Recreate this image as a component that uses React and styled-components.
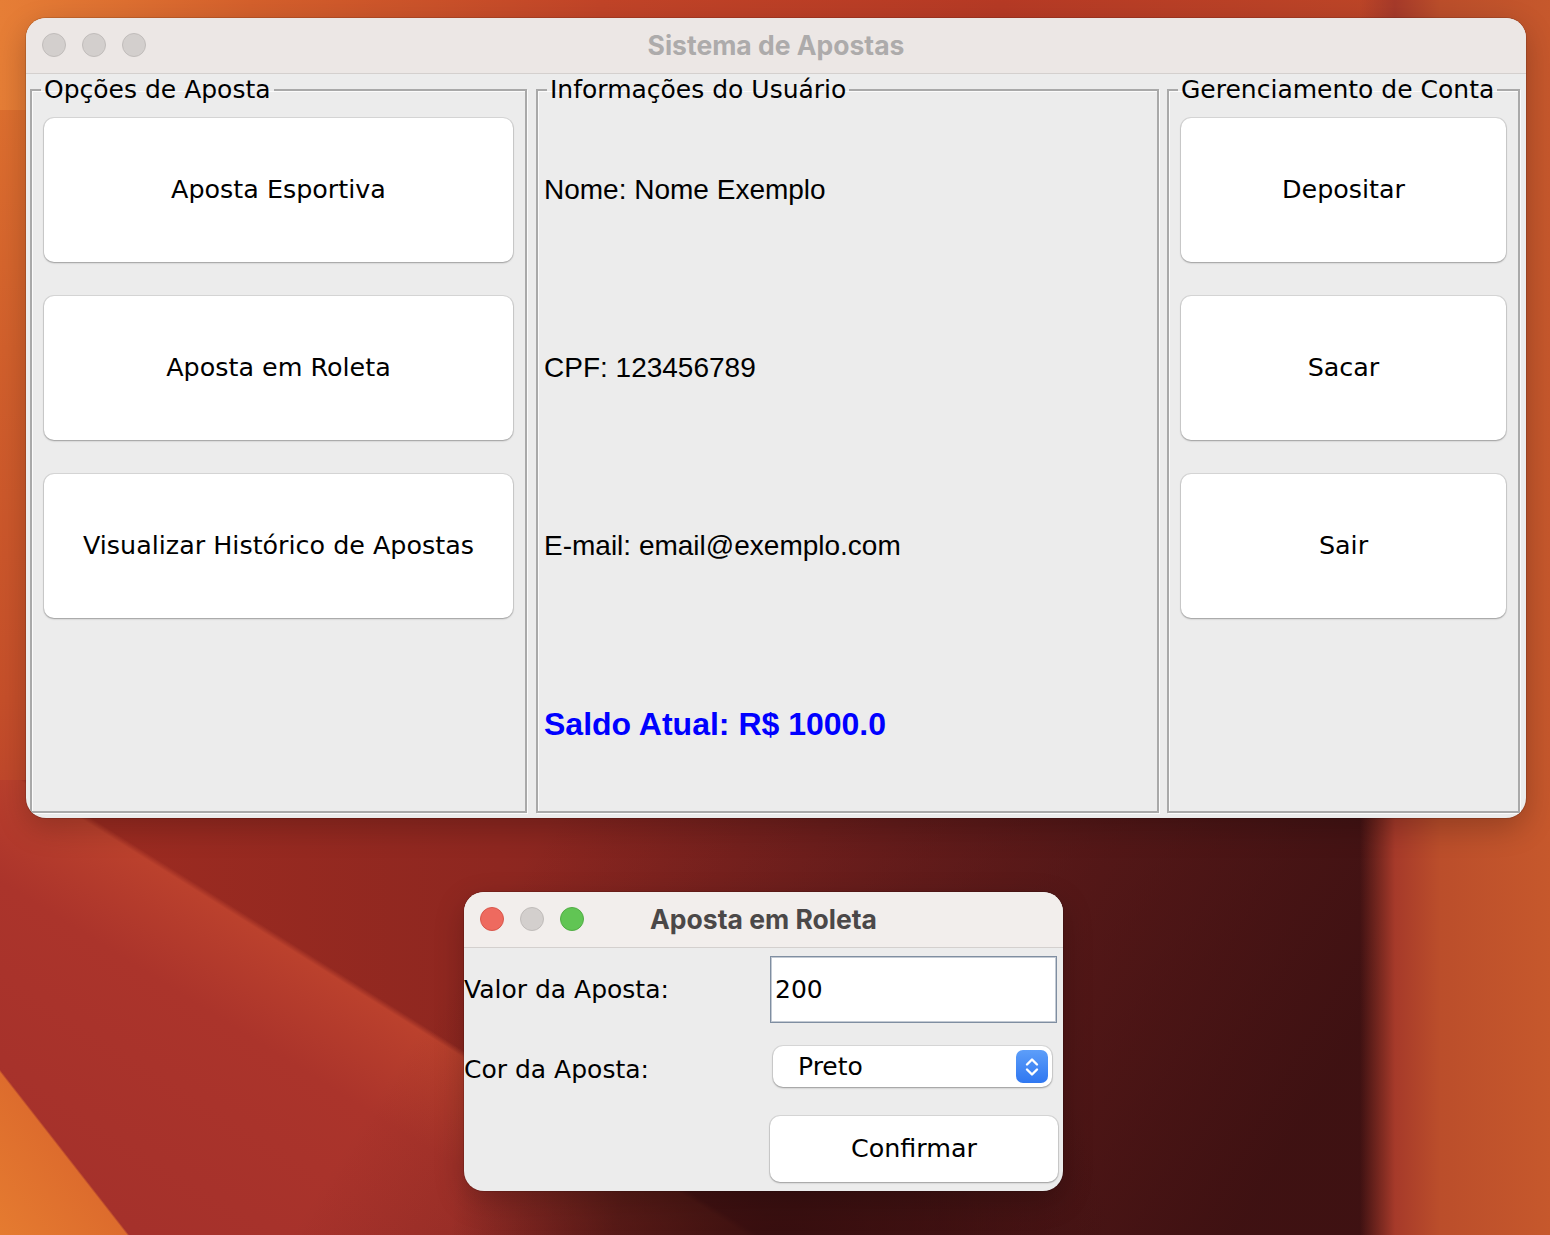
import React from 'react';
import styled, { createGlobalStyle } from 'styled-components';

const GlobalStyle = createGlobalStyle`
  html, body {
    margin: 0;
    padding: 0;
  }
  body {
    width: 1550px;
    height: 1235px;
    overflow: hidden;
    font-family: "DejaVu Sans", "Noto Sans", sans-serif;
  }
`;

// macOS Ventura style wallpaper, built from layered gradients
const Desktop = styled.div`
  width: 1550px;
  height: 1235px;
  box-sizing: border-box;
  padding: 18px 24px 0 26px;
  background:
    linear-gradient(52deg, #e57b30 0, #dd6c2d 100px, transparent 102px),
    linear-gradient(to right, transparent 1360px, #a63a2a 1395px, #bb4e2b 1440px, #c6582c 1550px),
    linear-gradient(to right, #e67e36, #d4602c 250px, #c14428 600px, #b63a25 1000px, #bd4628 1400px, #c24c29) 0 0 / 100% 110px no-repeat,
    linear-gradient(#e27530, #d2602c 350px, #c64f2a 700px, #c0482b 780px) 0 0 / 30px 780px no-repeat,
    radial-gradient(circle 330px at 780px 1250px, rgba(50, 13, 14, 0.9) 0, rgba(50, 13, 14, 0.6) 50%, rgba(50, 13, 14, 0) 100%),
    linear-gradient(122deg, rgba(55, 15, 16, 0) 900px, rgba(55, 15, 16, 0.85) 1700px),
    linear-gradient(32deg, #a3302b 0, #ab342b 300px, #bb412d 396px, transparent 402px),
    linear-gradient(to right, #a02c21, #8e2720 500px, #7a2220 900px, #6a1e1e 1300px);
`;

const Window = styled.div`
  width: ${p => p.$w}px;
  height: ${p => p.$h}px;
  margin: ${p => p.$margin || 0};
  box-sizing: border-box;
  border-radius: 20px;
  background: #ececec;
  overflow: hidden;
  display: flex;
  flex-direction: column;
  box-shadow: 0 0 0 1px rgba(0, 0, 0, 0.12), 0 10px 30px rgba(0, 0, 0, 0.22);
`;

const TitleBar = styled.div`
  flex: none;
  height: 54px;
  display: grid;
  grid-template-columns: 1fr auto 1fr;
  align-items: center;
  padding: 0 16px 1px;
  background: ${p => (p.$active ? '#f2eeec' : '#ece7e5')};
  border-bottom: 1px solid #d4d0ce;
`;

const Lights = styled.div`
  display: flex;
  gap: 16px;
`;

const Light = styled.span`
  width: 24px;
  height: 24px;
  border-radius: 50%;
  box-sizing: border-box;
  background: ${p => p.$color};
  border: 1px solid ${p => p.$edge};
`;

const WindowTitle = styled.div`
  font-family: Inter, "Liberation Sans", sans-serif;
  font-weight: 700;
  font-size: 26.5px;
  color: ${p => (p.$active ? '#4b4848' : '#adabab')};
  white-space: nowrap;
`;

const MainContent = styled.div`
  flex: 1;
  display: grid;
  grid-template-columns: 498px 623px 353px;
  gap: 8px;
  padding: 2px 5px 5px 4px;
  & > :first-child {
    margin-right: 1px;
  }
`;

const Group = styled.fieldset`
  margin: 0;
  min-width: 0;
  padding: 0 ${p => p.$pad}px;
  border: 2px solid #a9a9a9;
  box-shadow: inset 1px 1px 0 #fbfbfb, 1px 1px 0 #fbfbfb;
`;

const GroupTitle = styled.legend`
  padding: 0 3px;
  margin-left: ${p => 9 - p.$pad}px;
  font-size: 25px;
  line-height: 28px;
  color: #000;
`;

const Rows = styled.div`
  display: grid;
  grid-template-rows: repeat(4, 144px);
  row-gap: 34px;
  padding-top: 14px;
`;

const Button = styled.button`
  margin: ${p => p.$margin || 0};
  border: none;
  border-radius: 10px;
  background: #fff;
  box-shadow: 0 0 0 1px rgba(0, 0, 0, 0.09), 0 1px 2px rgba(0, 0, 0, 0.28);
  font-family: "DejaVu Sans", sans-serif;
  font-size: 25.4px;
  color: #000;
  padding: 0 0 2px;
`;

const Info = styled.div`
  display: flex;
  align-items: center;
  font-family: "Liberation Sans", Arial, sans-serif;
  font-size: ${p => (p.$strong ? 32 : 28)}px;
  font-weight: ${p => (p.$strong ? 700 : 400)};
  color: ${p => (p.$strong ? '#0000ff' : '#000')};
`;

const DialogBody = styled.div`
  flex: 1;
  display: grid;
  grid-template-columns: 306px 1fr;
  grid-template-rows: 81px 81px 81px;
  padding-right: 5px;
`;

const FieldLabel = styled.div`
  display: flex;
  align-items: center;
  padding-top: ${p => p.$shift || 0}px;
  font-size: 25px;
  color: #000;
`;

const TextField = styled.div`
  margin: 8px 1px 6px 0;
  display: flex;
  align-items: center;
  padding-left: 4px;
  background: #fff;
  border: 1px solid #7f8ea1;
  box-shadow: inset 0 0 0 1px #c3cad3;
  font-size: 25px;
  color: #000;
`;

const Select = styled.div`
  align-self: center;
  margin: 0 6px 6px 3px;
  height: 41px;
  display: flex;
  align-items: center;
  justify-content: space-between;
  padding: 0 4px 0 25px;
  border-radius: 10px;
  background: #fff;
  box-shadow: 0 0 0 1px rgba(0, 0, 0, 0.08), 0 1px 2px rgba(0, 0, 0, 0.3);
  font-size: 25px;
  color: #000;
`;

const Stepper = styled.span`
  width: 32px;
  height: 33px;
  border-radius: 7px;
  background: linear-gradient(#5d9ef9, #2f77f1);
  display: flex;
  align-items: center;
  justify-content: center;
`;

function Chevrons() {
  return (
    <svg width="18" height="24" viewBox="0 0 18 24">
      <path d="M4 9.5 L9 4.5 L14 9.5" fill="none" stroke="#fff" strokeWidth="2.4" strokeLinecap="round" strokeLinejoin="round" />
      <path d="M4 14.5 L9 19.5 L14 14.5" fill="none" stroke="#fff" strokeWidth="2.4" strokeLinecap="round" strokeLinejoin="round" />
    </svg>
  );
}

function TrafficLights({ active }) {
  return (
    <Lights>
      <Light $color={active ? '#ee6a5f' : '#d3cfcd'} $edge={active ? '#d8574c' : '#c0bcba'} />
      <Light $color="#d3cfcd" $edge="#c0bcba" />
      <Light $color={active ? '#61c554' : '#d3cfcd'} $edge={active ? '#51ad45' : '#c0bcba'} />
    </Lights>
  );
}

export default function App() {
  return (
    <Desktop>
      <GlobalStyle />
      <Window $w={1500} $h={800}>
        <TitleBar>
          <TrafficLights />
          <WindowTitle>Sistema de Apostas</WindowTitle>
        </TitleBar>
        <MainContent>
          <Group $pad={12}>
            <GroupTitle $pad={12}>Opções de Aposta</GroupTitle>
            <Rows>
              <Button>Aposta Esportiva</Button>
              <Button>Aposta em Roleta</Button>
              <Button>Visualizar Histórico de Apostas</Button>
            </Rows>
          </Group>
          <Group $pad={6}>
            <GroupTitle $pad={6}>Informações do Usuário</GroupTitle>
            <Rows>
              <Info>Nome: Nome Exemplo</Info>
              <Info>CPF: 123456789</Info>
              <Info>E-mail: email@exemplo.com</Info>
              <Info $strong>Saldo Atual: R$ 1000.0</Info>
            </Rows>
          </Group>
          <Group $pad={12}>
            <GroupTitle $pad={12}>Gerenciamento de Conta</GroupTitle>
            <Rows>
              <Button>Depositar</Button>
              <Button>Sacar</Button>
              <Button>Sair</Button>
            </Rows>
          </Group>
        </MainContent>
      </Window>

      <Window $w={599} $h={299} $margin="74px 0 0 438px">
        <TitleBar $active>
          <TrafficLights active />
          <WindowTitle $active>Aposta em Roleta</WindowTitle>
        </TitleBar>
        <DialogBody>
          <FieldLabel $shift={2}>Valor da Aposta:</FieldLabel>
          <TextField>200</TextField>
          <FieldLabel>Cor da Aposta:</FieldLabel>
          <Select>
            Preto
            <Stepper>
              <Chevrons />
            </Stepper>
          </Select>
          <span />
          <Button $margin="6px 0 9px 0">Confirmar</Button>
        </DialogBody>
      </Window>
    </Desktop>
  );
}
